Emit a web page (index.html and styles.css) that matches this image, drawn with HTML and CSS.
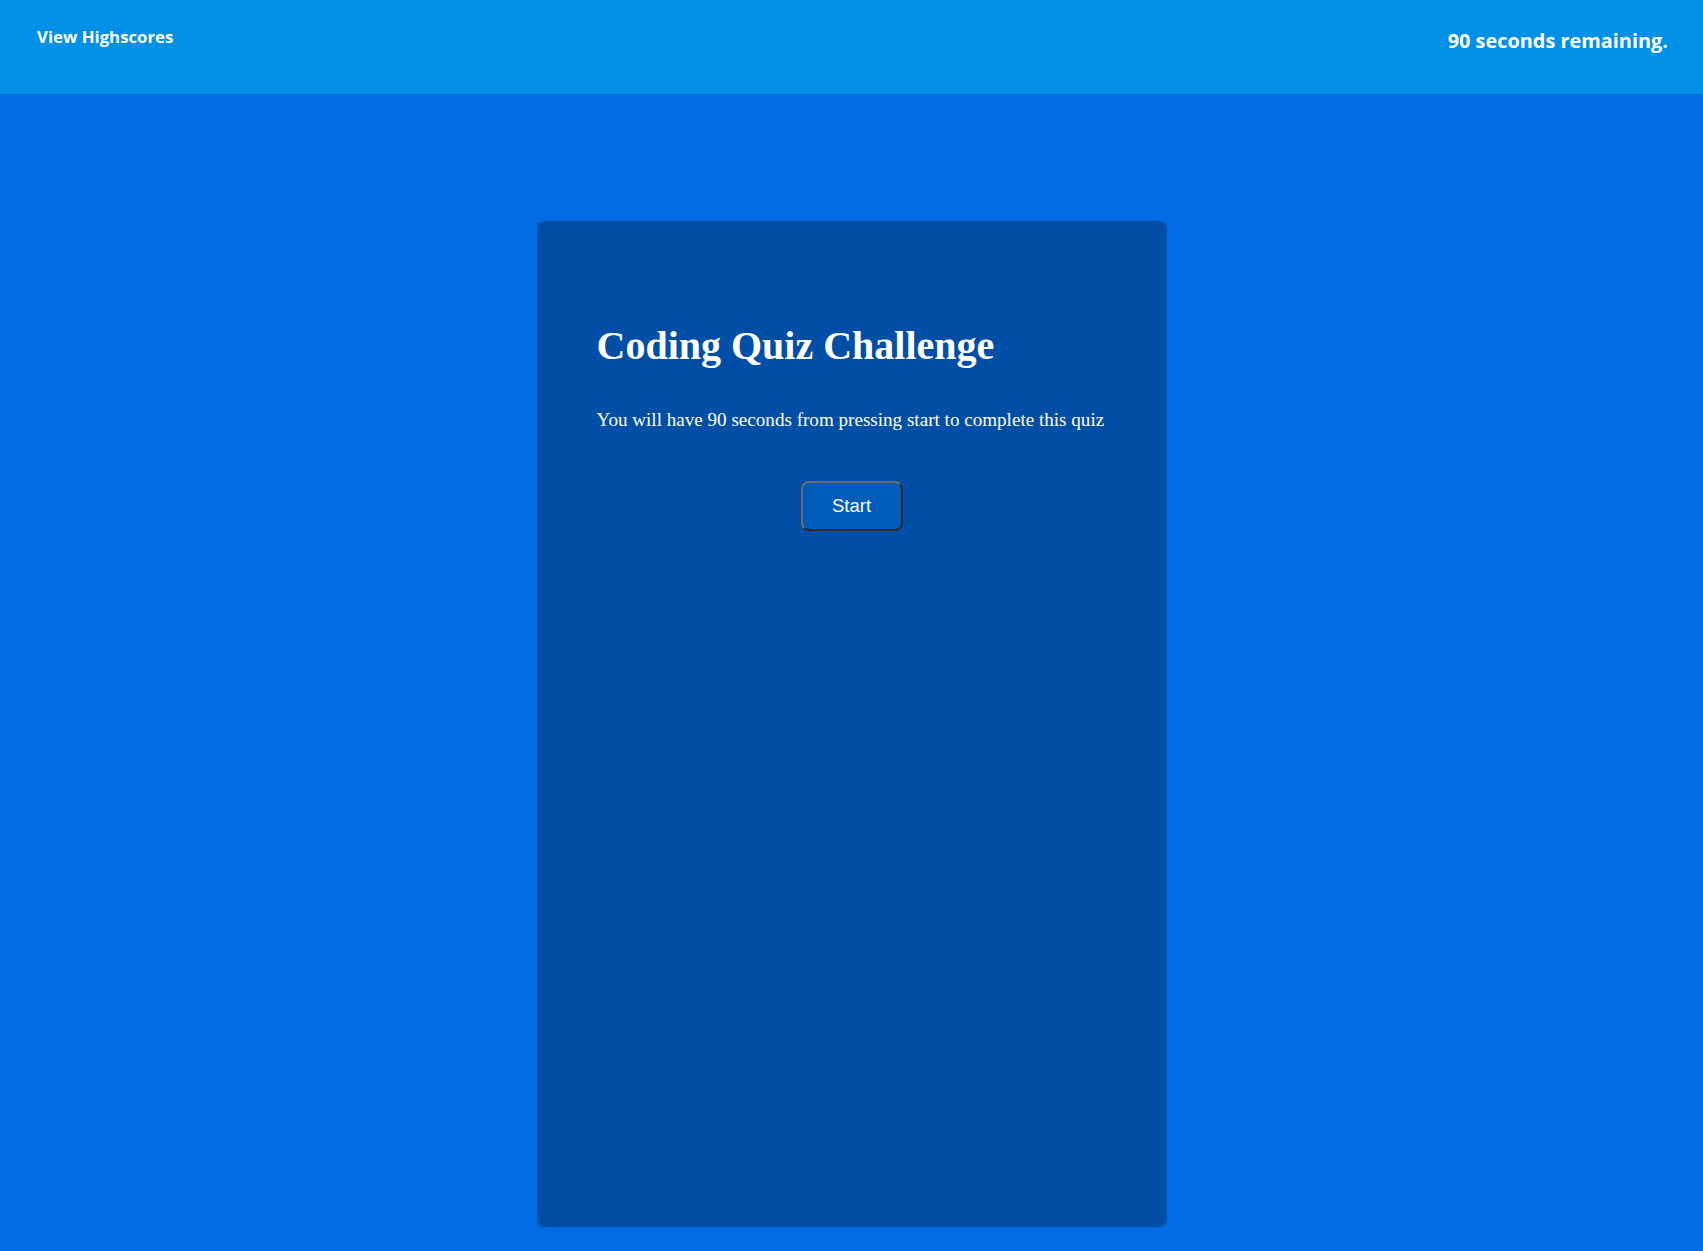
FILE: index.html
```html
<!DOCTYPE html>
<html>
<head>
<meta charset="utf-8">
<link rel="stylesheet" href="styles.css">
</head>
<body>
<header class="topbar">
  <a class="highscores">View Highscores</a>
  <div class="timer"><span class="time">90</span> seconds remaining.</div>
</header>
<main class="stage">
  <section class="card">
    <h1 class="title">Coding Quiz Challenge</h1>
    <p class="intro">You will have 90 seconds from pressing start to complete this quiz</p>
    <div class="actions"><button class="start">Start</button></div>
  </section>
</main>
</body>
</html>
```
FILE: styles.css
```css
html, body { margin: 0; padding: 0; }
body {
  background: #006be3;
  height: 1251px;
  overflow: hidden;
  font-family: "Liberation Serif", serif;
}
.topbar {
  height: 94px;
  background: #0091e6;
  display: flex;
  justify-content: space-between;
  align-items: flex-start;
  padding: 0 35px 0 37px;
  box-sizing: border-box;
  color: #fff;
  font-family: "Open Sans", sans-serif;
  font-weight: 700;
}
.highscores { font-size: 16.8px; margin-top: 26px; line-height: 22px; }
.timer { font-size: 19.9px; margin-top: 28px; line-height: 26px; }
.stage {
  display: flex;
  justify-content: center;
  padding-top: 127px;
}
.card {
  width: 630px;
  height: 1006px;
  background: #004ea6;
  border-radius: 8px;
  box-sizing: border-box;
  padding: 102px 60px 0 60px;
  color: #fff;
}
.title {
  margin: 0;
  font-size: 40px;
  font-weight: 700;
  line-height: 46px;
}
.intro {
  margin: 40px -20px 0 0;
  font-size: 19.1px;
  line-height: 22px;
  white-space: nowrap;
}
.actions {
  display: flex;
  justify-content: center;
  margin-top: 50px;
}
.start {
  width: 102px;
  height: 50px;
  background: #005bbb;
  color: #fff;
  font-family: "Liberation Sans", sans-serif;
  font-size: 18.5px;
  border: 2px solid;
  border-color: #6b6b6b #2a2a2a #2a2a2a #6b6b6b;
  border-radius: 8px;
}
```
